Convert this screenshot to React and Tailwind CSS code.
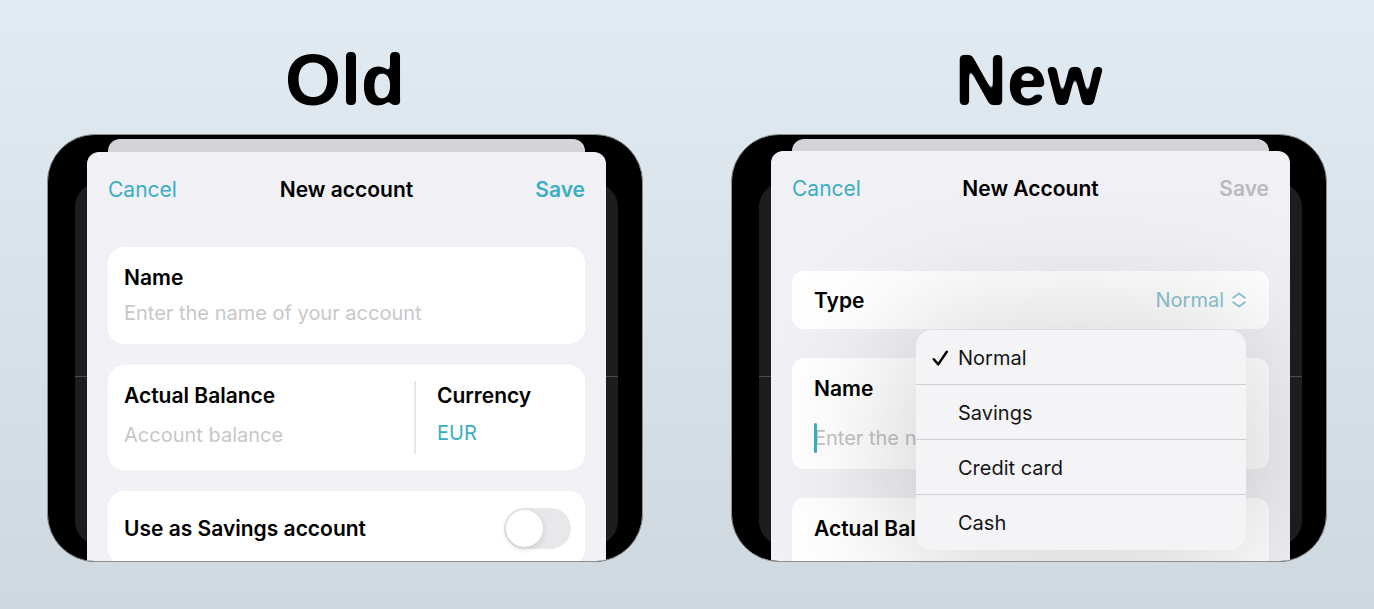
const ACCOUNT_TYPES = ["Normal", "Savings", "Credit card", "Cash"];

function RoundedInkFilter() {
  return (
    <svg className="absolute size-0" aria-hidden="true">
      <filter id="rounded-ink" x="-5%" y="-10%" width="110%" height="120%">
        <feGaussianBlur stdDeviation="1.9" />
        <feComponentTransfer>
          <feFuncA type="linear" slope="6" intercept="-2.4" />
        </feComponentTransfer>
      </filter>
    </svg>
  );
}

function Heading({ children }) {
  return (
    <h2 className="mb-[18px] text-center font-['Liberation_Sans',Arial,sans-serif] text-[72px] leading-[72px] font-bold text-black [filter:url(#rounded-ink)]">
      {children}
    </h2>
  );
}

function Phone({ children }) {
  return (
    <div className="grid overflow-hidden rounded-[48px] border border-[#8b8f8f] bg-black">
      <div className="col-start-1 row-start-1 mt-12 mr-6 mb-4 ml-[27px] rounded-3xl bg-[#1f1c20] pt-[193px]">
        <div className="h-px bg-[#4d4b4f]" />
      </div>
      <div className="col-start-1 row-start-1 mt-1 mr-[57px] ml-[60px] h-8 rounded-t-xl bg-[#d4d3d7]" />
      {children}
    </div>
  );
}

function SheetHeader({ title, saveDisabled }) {
  return (
    <header className="grid grid-cols-[1fr_auto_1fr] leading-7">
      <button type="button" className="justify-self-start text-[#3aaec3]">
        Cancel
      </button>
      <h3 className="font-semibold text-black">{title}</h3>
      <button
        type="button"
        disabled={saveDisabled}
        className="justify-self-end font-semibold text-[#3aaec3] disabled:text-[#bab9be]"
      >
        Save
      </button>
    </header>
  );
}

function OldForm() {
  return (
    <form className="col-start-1 row-start-1 mt-[17px] mr-9 ml-[39px] overflow-hidden rounded-t-xl bg-[#f1f0f5] px-[21px] pt-6">
      <SheetHeader title="New account" />
      <div className="mt-[43px] flex flex-col rounded-2xl bg-white px-4 py-[17px] leading-7">
        <label htmlFor="old-name" className="font-semibold">
          Name
        </label>
        <input
          id="old-name"
          type="text"
          placeholder="Enter the name of your account"
          className="mt-[7px] h-7 w-full bg-transparent text-[20px] outline-none placeholder:text-[#c7c7c9]"
        />
      </div>
      <div className="mt-[21px] flex rounded-2xl bg-white p-4 leading-7">
        <div className="flex min-w-0 flex-1 flex-col pt-px">
          <label htmlFor="old-balance" className="font-semibold">
            Actual Balance
          </label>
          <input
            id="old-balance"
            type="text"
            placeholder="Account balance"
            className="mt-[11px] h-7 w-full bg-transparent text-[20px] outline-none placeholder:text-[#c7c7c9]"
          />
        </div>
        <div className="flex w-[155px] flex-col items-start border-l-2 border-[#e6e6e8] pt-px pb-[7px] pl-[21px]">
          <span id="old-currency" className="font-semibold">
            Currency
          </span>
          <button type="button" aria-describedby="old-currency" className="mt-[9px] text-[20px] text-[#3aaec3]">
            EUR
          </button>
        </div>
      </div>
      <div className="mt-[21px] -mb-1 flex h-[74px] items-center justify-between rounded-2xl bg-white pr-3.5 pl-4">
        <label htmlFor="old-savings" className="pt-px font-semibold">
          Use as Savings account
        </label>
        <input
          id="old-savings"
          type="checkbox"
          role="switch"
          className="flex h-[41px] w-[67px] appearance-none items-center rounded-full bg-[#e8e8ea] px-0.5 before:size-[37px] before:rounded-full before:bg-white before:shadow-[0_2px_6px_rgba(0,0,0,0.14)] checked:bg-[#3aaec3] checked:before:translate-x-[26px]"
        />
      </div>
    </form>
  );
}

function UpDownChevrons() {
  return (
    <svg viewBox="0 0 14 16" className="h-4 w-3.5" fill="none" stroke="currentColor" strokeWidth="1.8" strokeLinecap="round" strokeLinejoin="round" aria-hidden="true">
      <path d="M1.2 5.8 7 1.4l5.8 4.4" />
      <path d="M1.2 10.2 7 14.6l5.8-4.4" />
    </svg>
  );
}

function Checkmark() {
  return (
    <svg viewBox="0 0 16 16" className="size-4" fill="none" stroke="currentColor" strokeWidth="2.4" strokeLinecap="round" strokeLinejoin="round" aria-hidden="true">
      <path d="M1.8 9.2 6.2 14.4 14.8 1.8" />
    </svg>
  );
}

function TypeMenu() {
  return (
    <ul
      role="menu"
      aria-labelledby="type-button"
      className="absolute top-[59px] right-[23px] z-10 w-[330px] divide-y divide-[#cfcfd2] overflow-hidden rounded-2xl bg-[#f4f4f6] shadow-[0_8px_140px_12px_rgba(0,0,0,0.19)]"
    >
      {ACCOUNT_TYPES.map((type, index) => (
        <li key={type} role="none" className="h-[55px]">
          <button
            type="button"
            role="menuitemradio"
            aria-checked={index === 0}
            className="flex h-full w-full items-center pt-px text-left text-[20px] text-[#141416]"
          >
            <span className="flex w-[42px] justify-center pl-1.5 text-black">{index === 0 && <Checkmark />}</span>
            {type}
          </button>
        </li>
      ))}
    </ul>
  );
}

function NewForm() {
  return (
    <form className="col-start-1 row-start-1 mt-4 mr-9 ml-[39px] overflow-hidden rounded-t-xl bg-[#f1f0f5] px-[21px] pt-6">
      <SheetHeader title="New Account" saveDisabled />
      <div className="relative mt-[68px] flex h-[58px] items-center justify-between rounded-xl bg-white pr-[23px] pl-[22px]">
        <span className="pt-px font-semibold">Type</span>
        <button
          id="type-button"
          type="button"
          aria-haspopup="menu"
          aria-expanded="true"
          className="flex items-center gap-2 text-[20px] text-[#89c6d0]"
        >
          Normal
          <UpDownChevrons />
        </button>
        <TypeMenu />
      </div>
      <div className="mt-[29px] flex flex-col rounded-xl bg-white px-[22px] pt-[17px] pb-4 leading-7">
        <label htmlFor="new-name" className="font-semibold">
          Name
        </label>
        <div className="relative mt-5 flex h-[30px] items-center">
          <input
            id="new-name"
            type="text"
            placeholder="Enter the name of your account"
            className="h-[30px] w-full bg-transparent text-[20px] outline-none placeholder:text-[#c2c2c4]"
          />
          <span className="absolute inset-y-0 left-0 w-[3px] rounded-full bg-[#3aaec3]" />
        </div>
      </div>
      <div className="mt-[29px] flex h-[63px] flex-col rounded-t-xl bg-white px-[22px] pt-[17px] leading-7">
        <span className="font-semibold">Actual Balance</span>
      </div>
    </form>
  );
}

export default function App() {
  return (
    <main className="grid min-h-screen grid-cols-2 content-start gap-x-[88px] bg-linear-to-b from-[#e3ebf2] to-[#cfd7df] px-[47px] pt-11 pb-[47px] font-['Inter','Liberation_Sans',sans-serif] text-[21px] text-black">
      <section>
        <RoundedInkFilter />
        <Heading>Old</Heading>
        <Phone>
          <OldForm />
        </Phone>
      </section>
      <section>
        <Heading>New</Heading>
        <Phone>
          <NewForm />
        </Phone>
      </section>
    </main>
  );
}
